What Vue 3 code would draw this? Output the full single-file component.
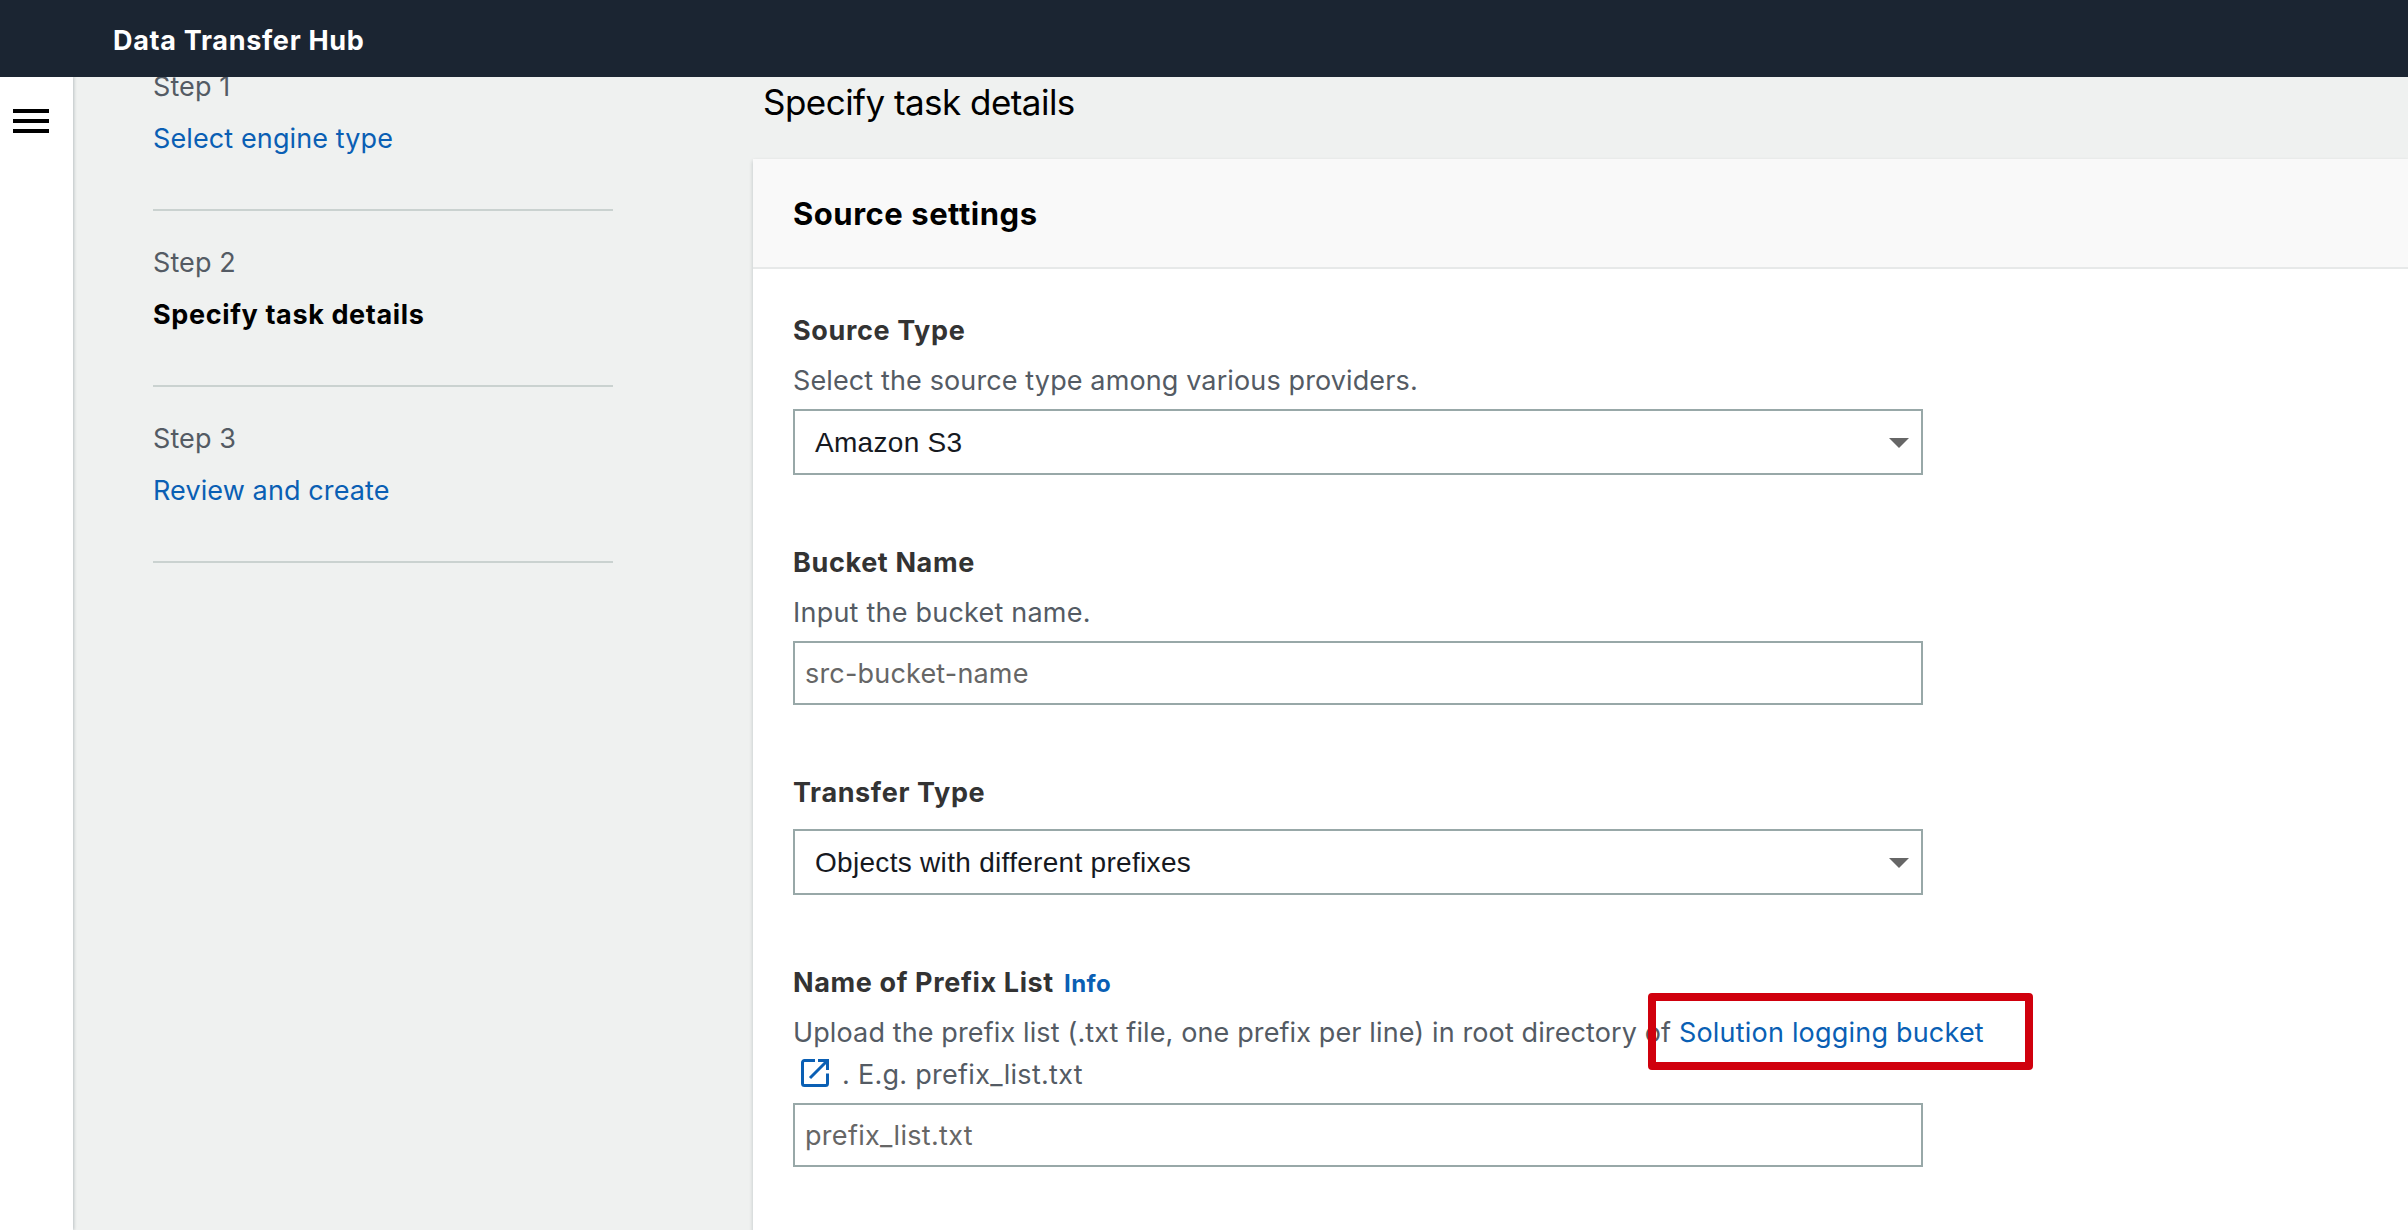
<script setup>
const steps = [
  { label: 'Step 1', title: 'Select engine type', active: false },
  { label: 'Step 2', title: 'Specify task details', active: true },
  { label: 'Step 3', title: 'Review and create', active: false },
]
</script>

<template>
  <div class="app">
    <header class="topbar"><span class="brand">Data Transfer Hub</span></header>
    <div class="body">
      <aside class="rail">
        <div class="menu"><i></i><i></i><i></i></div>
      </aside>
      <nav class="steps">
        <div v-for="s in steps" :key="s.label" class="step">
          <div class="step-label">{{ s.label }}</div>
          <div class="step-title" :class="{ active: s.active }">{{ s.title }}</div>
        </div>
      </nav>
      <main class="main">
        <h1 class="title">Specify task details</h1>
        <section class="card">
          <div class="card-head">Source settings</div>
          <div class="card-body">
            <div class="field">
              <div class="label">Source Type</div>
              <p class="desc">Select the source type among various providers.</p>
              <div class="control select"><span>Amazon S3</span><i class="caret"></i></div>
            </div>
            <div class="field">
              <div class="label">Bucket Name</div>
              <p class="desc short">Input the bucket name.</p>
              <div class="control input">src-bucket-name</div>
            </div>
            <div class="field bare">
              <div class="label">Transfer Type</div>
              <div class="control select"><span>Objects with different prefixes</span><i class="caret"></i></div>
            </div>
            <div class="field">
              <div class="label">Name of Prefix List<a class="info">Info</a></div>
              <p class="desc">
                Upload the prefix list (.txt file, one prefix per line) in root directory of&nbsp;<a class="link">Solution logging bucket<span class="highlight"></span></a><br>
                <svg class="ext" viewBox="0 0 28 28" width="28" height="28" fill="none" stroke="#0a5fb4" stroke-width="3"><path d="M14 1.500H3.500a2 2 0 0 0-2 2v21a2 2 0 0 0 2 2h21a2 2 0 0 0 2-2V14.500M17 1.500h9.500V11M26 2L9 19" /></svg><span class="example">. E.g. prefix_list.txt</span>
              </p>
              <div class="control input wide">prefix_list.txt</div>
            </div>
          </div>
        </section>
      </main>
    </div>
  </div>
</template>

<style>
body { margin: 0; }
</style>
<style scoped>
.app {
  width: 2408px;
  height: 1230px;
  overflow: hidden;
  display: flex;
  flex-direction: column;
  font-family: Inter, "Liberation Sans", sans-serif;
  font-size: 27px;
  line-height: 40px;
  color: #000;
  background: #eff1f0;
}
.topbar {
  height: 77px;
  flex: none;
  box-sizing: border-box;
  padding: 21px 0 0 113px;
  background: #1b2532;
  color: #fff;
  font-weight: 700;
  letter-spacing: 0.7px;
}
.body { flex: 1; display: flex; min-height: 0; overflow: hidden; }
.rail {
  width: 73px;
  flex: none;
  box-sizing: border-box;
  padding: 32px 0 0 13px;
  background: #fff;
  box-shadow: 1px 0 3px rgba(0, 28, 36, 0.22);
}
.menu { display: flex; flex-direction: column; gap: 6px; }
.menu i { width: 36px; height: 4px; background: #000; }
.steps { width: 460px; flex: none; margin: -10px 0 0 80px; }
.step { height: 142px; margin-bottom: 32px; border-bottom: 2px solid #cad2d0; }
.step-label { color: #545b64; margin-bottom: 12px; letter-spacing: 0.1px; }
.step-title { color: #0a5fb4; letter-spacing: 0.11px; }
.step-title.active { color: #000; font-weight: 700; letter-spacing: 0.63px; }
.main { flex: 1; margin-left: 140px; padding-top: 3px; }
.title {
  margin: 0 0 35px 10px;
  font-size: 35px;
  line-height: 44px;
  font-weight: 400;
  letter-spacing: -0.54px;
}
.card { background: #fff; height: 1100px; box-shadow: 0 2px 4px rgba(0, 28, 36, 0.22); }
.card-head {
  height: 110px;
  box-sizing: border-box;
  padding: 36px 40px;
  border-bottom: 2px solid #e7e9e9;
  background: #f9f9f9;
  font-size: 31px;
  line-height: 38px;
  font-weight: 700;
  letter-spacing: 0.53px;
}
.card-body { padding: 42px 40px; }
.field { margin-bottom: 68px; }
.label { font-weight: 700; color: #333; letter-spacing: 0.63px; }
.info { font-size: 24px; line-height: 1; color: #0a5fb4; margin-left: 10px; letter-spacing: 0.5px; }
.desc { margin: 9px 0 7px; line-height: 42px; color: #545b64; white-space: nowrap; letter-spacing: 0.12px; }
.desc.short { letter-spacing: 0.22px; }
.link { position: relative; color: #0a5fb4; letter-spacing: 0.2px; }
.highlight {
  position: absolute;
  left: -31px;
  top: -23px;
  width: 385px;
  height: 77px;
  box-sizing: border-box;
  border: 8px solid #d0000d;
  border-radius: 4px;
}
.ext { margin: 0 13px 0 8px; vertical-align: -3px; }
.example { letter-spacing: 0.28px; }
.control {
  width: 1130px;
  box-sizing: border-box;
  border: 2px solid #98a8a8;
  display: flex;
  align-items: center;
}
.select {
  height: 66px;
  padding: 0 12px 0 20px;
  justify-content: space-between;
  font-family: "Liberation Sans", Arial, sans-serif;
  font-size: 28px;
  color: #16191f;
  letter-spacing: 0.3px;
}
.select span { padding-top: 2px; }
.bare .select { margin-top: 16px; }
.input { height: 64px; padding: 2px 0 0 10px; color: #666; letter-spacing: 0.18px; }
.input.wide { letter-spacing: 0.3px; }
.caret { margin-top: 2px; border: 10px solid transparent; border-top-color: #666; border-bottom: 0; }
</style>
